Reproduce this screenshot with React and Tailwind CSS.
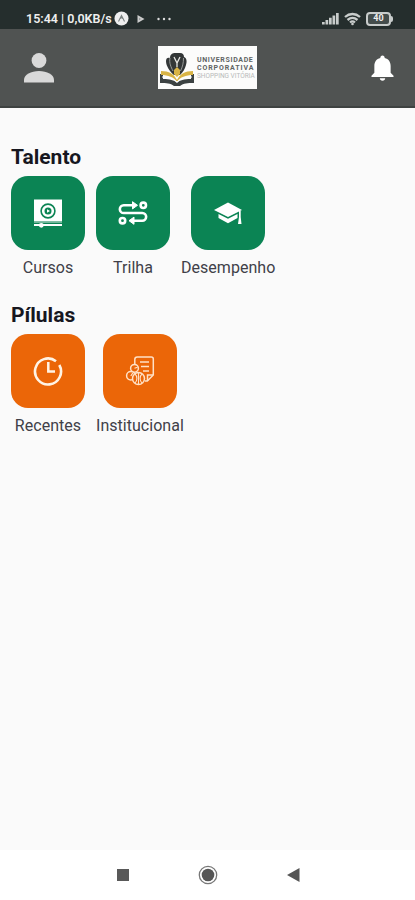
import React from 'react';

const CoursesIcon = () => (
  <svg width="30" height="30" viewBox="0 0 30 30" fill="none">
    <path d="M1 1.5h28v22H1z" fill="#fff" />
    <circle cx="15" cy="13" r="6.9" stroke="#0b8454" strokeWidth="1.6" />
    <circle cx="15" cy="13" r="3.5" fill="#0b8454" />
    <path d="M14 11.2l3 1.8-3 1.8z" fill="#fff" />
    <path d="M1 27h28" stroke="#fff" strokeWidth="2" />
    <path d="M1 24.2h28" stroke="#7dbda2" strokeWidth="1.4" />
    <circle cx="8.3" cy="27.3" r="2.4" fill="#fff" />
  </svg>
);

const TrailIcon = () => (
  <svg width="30" height="30" viewBox="0 0 30 30" fill="none" stroke="#fff" strokeWidth="2.6">
    <circle cx="25.3" cy="7.3" r="2.7" />
    <circle cx="4.5" cy="22.7" r="2.7" />
    <path d="M15 7.3H5.7a3.8 3.8 0 0 0 0 7.7h18.6a3.8 3.8 0 0 1 0 7.7H15" />
    <path d="M14.5 3.7l5 3.6-5 3.6zM16 19.1l-5 3.6 5 3.6z" fill="#fff" strokeWidth="1" />
  </svg>
);

const PerformanceIcon = () => (
  <svg width="30" height="30" viewBox="0 0 30 30" fill="#fff">
    <path d="M15 4.5L29 12 15 19 1 12z" />
    <path d="M5.5 16l9.5 4.7 9.5-4.7v4L15 25.2 5.500 20z" />
    <path d="M26 13h1.7v6l.8 7H25l1-7z" />
  </svg>
);

const RecentIcon = () => (
  <svg width="30" height="30" viewBox="0 0 30 30" fill="none" stroke="#fff3e4">
    <path d="M23 5.2A13 13 0 1 0 26.3 9" strokeWidth="2.6" />
    <path d="M15.3 6v9.4H22" strokeWidth="2.5" />
  </svg>
);

const InstitutionalIcon = () => (
  <svg width="30" height="30" viewBox="0 0 30 30" fill="none" stroke="#ffe1c6" strokeWidth="1.5">
    <path d="M9.8 8V3.5A2.5 2.5 0 0 1 12.3 1h14a2 2 0 0 1 2 2v16l-6 6H20" />
    <path d="M28 19h-5.5v6M15 6h9M16 10.5h8M18 15h6" />
    <circle cx="9.5" cy="12.3" r="3.9" fill="#eb6608" />
    <circle cx="5.8" cy="19.8" r="4.2" fill="#eb6608" />
    <circle cx="13.5" cy="22.5" r="6" fill="#eb6608" />
    <path d="M13.5 16.5v12M10 18c2.5 2 2.5 7 0 9M17 18c-2.5 2-2.5 7 0 9" strokeWidth="1.1" />
    <path d="M9.5 12.3l3-1M5.8 20l2-3" strokeWidth="1.2" />
  </svg>
);

const sections = [
  {
    title: 'Talento',
    color: 'bg-[#0b8454]',
    items: [
      { label: 'Cursos', icon: CoursesIcon },
      { label: 'Trilha', icon: TrailIcon },
      { label: 'Desempenho', icon: PerformanceIcon },
    ],
  },
  {
    title: 'Pílulas',
    color: 'bg-[#eb6608]',
    items: [
      { label: 'Recentes', icon: RecentIcon },
      { label: 'Institucional', icon: InstitutionalIcon },
    ],
  },
];

const StatusBar = () => (
  <div className="flex h-[29px] items-center justify-between bg-[#252e2d] pt-2 pr-[22px] pl-[26px] text-[#eeeeee]">
    <div className="flex items-center">
      <span className="w-[86px] text-[12.5px] leading-4 font-semibold whitespace-nowrap">15:44 | 0,0KB/s</span>
      <svg className="ml-[2px]" width="15" height="15" viewBox="0 0 15 15" fill="none">
        <circle cx="7.5" cy="7.5" r="7" fill="#eee" />
        <path d="M4.5 10.5l3-6 3 6M5.5 8l2-1.5 2 1.5" stroke="#7b8281" strokeWidth="1.1" />
      </svg>
      <svg className="ml-[7px]" width="10" height="10" viewBox="0 0 10 10">
        <path d="M1.5 1l7 4-7 4z" fill="#ccc" />
        <path d="M3 4l2 1-2 1z" fill="#8a9190" />
      </svg>
      <svg className="ml-[10px]" width="16" height="4" viewBox="0 0 16 4" fill="#ddd">
        <circle cx="2.5" cy="2" r="1.2" />
        <circle cx="8" cy="2" r="1.2" />
        <circle cx="13.5" cy="2" r="1.2" />
      </svg>
    </div>
    <div className="flex items-center gap-[5px]">
      <svg width="17" height="13" viewBox="0 0 17 13" fill="#c8cccb">
        <path d="M0 10h2.7v2.5H0zM3.5 8h2.7v4.5H3.5zM7 5.7h2.7v6.8H7zM10.5 3.4h2.7v9.1h-2.7zM14 1h2.7v11.5H14z" />
      </svg>
      <svg width="17" height="14" viewBox="0 0 17 14" fill="none" stroke="#c8cccb" strokeWidth="2.3">
        <path d="M1 5c4.5-4 10.5-4 15 0M3.5 8c3-2.5 7-2.5 10 0M6 10.5c1.5-1.3 3.5-1.3 5 0" />
        <circle cx="8.5" cy="12" r="1.3" fill="#c8cccb" stroke="none" />
      </svg>
      <div className="flex items-center">
        <div className="flex h-[14px] w-[25px] items-center justify-center rounded-[4px] border-2 border-[#c8cccb] bg-[#444d4c] text-[9px] leading-none font-bold">40</div>
        <div className="h-[6px] w-[2px] rounded-r bg-[#c8cccb]" />
      </div>
    </div>
  </div>
);

const Logo = () => (
  <div className="mr-[10px] flex h-[43px] w-[99px] items-center bg-[#fcfcfb]">
    <svg className="shrink-0" width="38" height="43" viewBox="0 0 38 43" fill="none">
      {/* book */}
      <path d="M2 28h3v5c7 0 11 1 14 4 3-3 7-4 14-4v-5h3v9c-7 0-10 0-14 3h-6c-4-3-7-3-14-3z" fill="#3c4242" />
      <path d="M3 25c8 0 13 3 16 9 3-6 8-9 16-9v4c-7 0-13 2-16 7-3-5-9-7-16-7z" fill="#d9b445" />
      <path d="M4 31c7 0 12 2 15 5 3-3 8-5 15-5" stroke="#fff" strokeWidth="1" />
      {/* hands */}
      <path d="M16 29C12 26 8 20 8 15c0-3 2-4 4-3 0-4 3-5 5-5h5c3 0 4 2 4 4 3 1 3 5 2 8-1 4-3 7-6 10z" fill="#333737" />
      <path d="M12 12c-1 5 1 9 3 13M25.500 12c0 5-1 9-3 13" stroke="#a4a7a5" strokeWidth=".9" />
      <path d="M16 11l3 6 3-6M19 17v4" stroke="#e8e8e4" strokeWidth="1.3" />
      <path d="M16 24l3-3 3 3v4l-3 3-3-3z" fill="#d9b445" />
    </svg>
    <div className="ml-px flex flex-col">
      <div className="h-[8px] text-[7px] leading-[8px] font-bold tracking-[0.65px] text-[#606464]">
        UNIVERSIDADE
      </div>
      <div className="h-[8px] text-[7px] leading-[8px] font-bold tracking-[0.9px] text-[#606464]">
        CORPORATIVA
      </div>
      <div className="h-[8px] text-[6.5px] leading-[8px] whitespace-nowrap text-[#b8baba]">
        SHOPPING VITÓRIA
      </div>
    </div>
  </div>
);

const Header = () => (
  <header className="flex h-[79px] items-center justify-between border-b-2 border-[#3e4241] bg-[#505352] pr-[21px] pl-6">
    <button aria-label="Perfil">
      <svg width="30" height="31" viewBox="0 0 30 31" fill="#d9d9d9">
        <circle cx="15" cy="8.5" r="7.4" />
        <path d="M0 30.5V28C0 22.5 7 19 15 19s15 3.5 15 9v2.5z" />
      </svg>
    </button>
    <Logo />
    <button aria-label="Notificações" className="pt-px">
      <svg width="23" height="28" viewBox="0 0 24 28" fill="#fff">
        <path d="M12 1c1.4 0 2.3 1 2.3 2.500 4 1 6.200 4 6.200 8.500v7l3 3v1.500H.5V22l3-3v-7c0-4.500 2.200-7.500 6.200-8.500C9.700 2 10.600 1 12 1zM9.200 24.700h5.600c0 1.500-1.100 2.500-2.800 2.500s-2.800-1-2.800-2.500z" />
      </svg>
    </button>
  </header>
);

const MenuItem = ({ label, icon: Icon, color }) => (
  <button className="flex flex-col items-center">
    <span className={`flex h-[74px] w-[74px] items-center justify-center rounded-[17px] ${color}`}>
      <Icon />
    </span>
    <span className="mt-[8px] text-[16px] leading-5 tracking-[0.03px] text-[#404048]">{label}</span>
  </button>
);

const BottomBar = () => (
  <nav className="flex h-[50px] items-center justify-center gap-[69px] bg-white pl-px">
    <svg width="12" height="12" viewBox="0 0 12 12">
      <path d="M0 0h12v12H0z" fill="#595959" />
    </svg>
    <svg width="20" height="20" viewBox="0 0 20 20">
      <circle cx="10" cy="10" r="8.7" fill="none" stroke="#777" strokeWidth="1.3" />
      <circle cx="10" cy="10" r="6.3" fill="#555" />
    </svg>
    <svg width="13" height="14" viewBox="0 0 13 14">
      <path d="M12.5 0v14L0 7z" fill="#555" />
    </svg>
  </nav>
);

const App = () => {
  return (
    <div className="flex h-screen flex-col bg-[#fafafa] font-[Roboto,sans-serif]">
      <StatusBar />
      <Header />
      <main className="flex-1 px-[11px] pt-[37px]">
        {sections.map((section) => (
          <section key={section.title} className="mb-[25px]">
            <h2 className="mb-[7px] text-[21px] leading-6 font-bold text-[#17171f]">{section.title}</h2>
            <div className="flex gap-[11px]">
              {section.items.map((item) => (
                <MenuItem key={item.label} {...item} color={section.color} />
              ))}
            </div>
          </section>
        ))}
      </main>
      <BottomBar />
    </div>
  );
};

export default App;
